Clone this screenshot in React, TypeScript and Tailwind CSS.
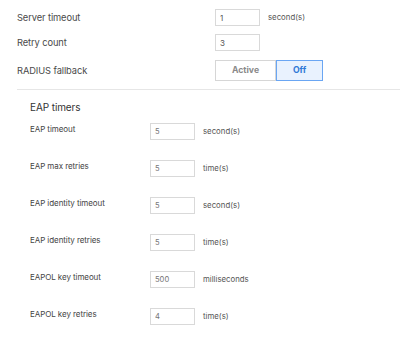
import React from 'react';

const eapRows = [
  { label: 'EAP timeout', value: '5', unit: 'second(s)' },
  { label: 'EAP max retries', value: '5', unit: 'time(s)' },
  { label: 'EAP identity timeout', value: '5', unit: 'second(s)' },
  { label: 'EAP identity retries', value: '5', unit: 'time(s)' },
  { label: 'EAPOL key timeout', value: '500', unit: 'milliseconds' },
  { label: 'EAPOL key retries', value: '4', unit: 'time(s)' },
];

const App: React.FC = () => {
  return (
    <div className="w-[400px] h-[347px] bg-white font-['Inter',sans-serif] overflow-hidden">
      <div className="pl-[17px] pt-[9px]">
        <div className="flex items-center h-[17px]">
          <label className="w-[198px] text-[9.3px] tracking-[-0.01em] text-[#4a4a4a]">Server timeout</label>
          <input
            type="text"
            defaultValue="1"
            className="w-[45px] h-[17px] border border-[#d9d9d9] px-[4px] text-[8px] text-[#555] outline-none"
          />
          <span className="ml-[8px] text-[7.8px] text-[#555]">second(s)</span>
        </div>

        <div className="flex items-center h-[17px] mt-[8px]">
          <label className="w-[198px] text-[9.3px] tracking-[-0.01em] text-[#4a4a4a]">Retry count</label>
          <input
            type="text"
            defaultValue="3"
            className="w-[45px] h-[17px] border border-[#d9d9d9] px-[4px] text-[8px] text-[#555] outline-none"
          />
        </div>

        <div className="flex items-center h-[21px] mt-[9px]">
          <label className="w-[198px] text-[9.3px] tracking-[-0.01em] text-[#4a4a4a]">RADIUS fallback</label>
          <div className="flex h-[21px]">
            <button className="w-[61px] h-full border border-[#d6d6d6] bg-white text-[8.7px] font-bold text-[#8a8a8a]">
              Active
            </button>
            <button className="w-[47px] h-full border border-[#6aa6f3] bg-[#e9f2fe] text-[8.7px] font-bold text-[#2f78d6]">
              Off
            </button>
          </div>
        </div>

        <div className="mt-[8px] border-t border-[#e6e6e6]" />
      </div>

      <div className="pl-[30px] pt-[11px]">
        <h3 className="text-[10px] tracking-[-0.01em] text-[#333] leading-[12px]">EAP timers</h3>
        <div className="mt-[10px] flex flex-col gap-[20px]">
          {eapRows.map((row) => (
            <div key={row.label} className="flex items-start h-[17px]">
              <label className="w-[120px] pt-[1px] text-[8px] tracking-[-0.01em] text-[#444] leading-[10px]">{row.label}</label>
              <input
                type="text"
                defaultValue={row.value}
                className="w-[45px] h-[17px] border border-[#d9d9d9] px-[4px] text-[7.6px] text-[#777] outline-none"
              />
              <span className="ml-[8px] text-[7.8px] text-[#555] self-center">{row.unit}</span>
            </div>
          ))}
        </div>
      </div>
    </div>
  );
};

export default App;
